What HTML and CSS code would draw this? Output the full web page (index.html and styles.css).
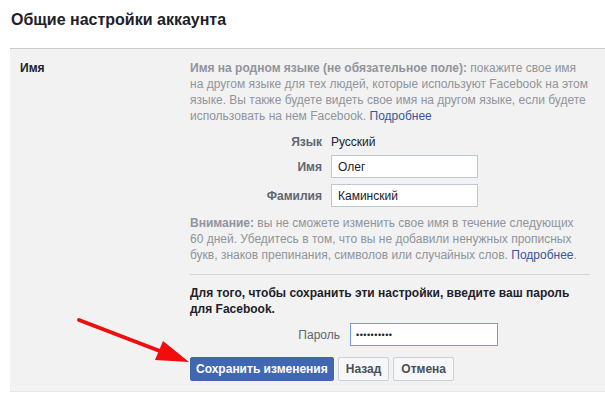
FILE: index.html
```html
<!DOCTYPE html>
<html lang="ru">
<head>
    <meta charset="UTF-8">
    <meta name="viewport" content="width=device-width, initial-scale=1.0">
    <title>Общие настройки аккаунта</title>
    <link rel="stylesheet" href="styles.css">
</head>
<body>
    <h1 class="page-title">Общие настройки аккаунта</h1>
    <div class="settings-panel">
        <div class="setting-label">Имя</div>
        <div class="setting-content">
            <p class="hint">
                <b>Имя на родном языке (не обязательное поле):</b> покажите свое имя<br>
                на другом языке для тех людей, которые используют Facebook на этом<br>
                языке. Вы также будете видеть свое имя на другом языке, если будете<br>
                использовать на нем Facebook. <a href="#">Подробнее</a>
            </p>
            <div class="field-row lang-row">
                <span class="field-label">Язык</span>
                <span class="field-value">Русский</span>
            </div>
            <div class="field-row">
                <span class="field-label">Имя</span>
                <input class="text-input" type="text" value="Олег">
            </div>
            <div class="field-row">
                <span class="field-label">Фамилия</span>
                <input class="text-input" type="text" value="Каминский">
            </div>
            <p class="hint warning">
                <b>Внимание:</b> вы не сможете изменить свое имя в течение следующих<br>
                60 дней. Убедитесь в том, что вы не добавили ненужных прописных<br>
                букв, знаков препинания, символов или случайных слов. <a href="#">Подробнее</a>.
            </p>
            <div class="confirm-block">
                <p class="confirm-text">
                    Для того, чтобы сохранить эти настройки, введите ваш пароль<br>
                    для Facebook.
                </p>
                <div class="password-row">
                    <span class="password-label">Пароль</span>
                    <input class="text-input password-input" type="password" value="1234567890">
                </div>
                <div class="button-row">
                    <button class="btn btn-primary">Сохранить изменения</button>
                    <button class="btn">Назад</button>
                    <button class="btn">Отмена</button>
                </div>
            </div>
        </div>
    </div>
    <!-- red annotation arrow pointing at the save button -->
    <svg class="annotation" width="605" height="393" viewBox="0 0 605 393">
        <line x1="79" y1="320" x2="165" y2="353" stroke="#f20c0c" stroke-width="4" stroke-linecap="round"/>
        <polygon points="189,362 155,360 163,341" fill="#f20c0c"/>
    </svg>
</body>
</html>
```

FILE: styles.css
```css
* {
    margin: 0;
    padding: 0;
    box-sizing: border-box;
}
body {
    background: #fff;
    font-family: 'Liberation Sans', Arial, sans-serif;
    font-size: 12px;
    color: #1d2129;
    position: relative;
    width: 605px;
    height: 393px;
    overflow: hidden;
}
.page-title {
    font-size: 16px;
    line-height: 20px;
    font-weight: bold;
    color: #1d2129;
    padding: 10px 0 18px 11px;
}
.settings-panel {
    margin-left: 10px;
    background: #f2f2f2;
    border-top: 1px solid #cccccc;
    border-bottom: 1px solid #e6e6e6;
    padding: 11px 15px 10px 10px;
    display: grid;
    grid-template-columns: 170px 1fr;
}
.setting-label {
    font-weight: bold;
    line-height: 16px;
    color: #1d2129;
}
.hint {
    color: #90949c;
    line-height: 16px;
}
.hint b {
    color: #90949c;
}
a {
    color: #365899;
    text-decoration: none;
}
.field-row {
    display: flex;
    align-items: center;
    gap: 9px;
    height: 23px;
    margin-top: 6px;
}
.field-row.lang-row {
    height: 20px;
    margin-top: 8px;
}
.field-row.lang-row + .field-row {
    margin-top: 3px;
}
.field-label {
    width: 132px;
    text-align: right;
    font-weight: bold;
    color: #606770;
}
.field-value {
    color: #1d2129;
}
.text-input {
    width: 147px;
    height: 23px;
    border: 1px solid #bdc7d8;
    background: #fff;
    padding: 0 6px;
    font-family: 'Liberation Sans', Arial, sans-serif;
    font-size: 12px;
    color: #1d2129;
    outline: none;
}
.warning {
    margin-top: 8px;
}
.confirm-block {
    margin-top: 11px;
    border-top: 1px solid #d3d6db;
    padding-top: 10px;
}
.confirm-text {
    font-weight: bold;
    line-height: 16px;
    color: #1d2129;
}
.password-row {
    display: flex;
    align-items: center;
    gap: 10px;
    margin-top: 6px;
    height: 23px;
}
.password-label {
    width: 150px;
    text-align: right;
    color: #606770;
}
.password-input {
    width: 148px;
    border-color: #6f9be8;
    font-size: 9px;
    letter-spacing: 0.5px;
    padding: 0 5px;
}
.button-row {
    display: flex;
    gap: 4px;
    margin-top: 11px;
}
.btn {
    height: 24px;
    padding: 0 7px;
    border: 1px solid #ced0d4;
    border-radius: 2px;
    background: #f6f7f9;
    color: #4b4f56;
    font-family: 'Liberation Sans', Arial, sans-serif;
    font-size: 12px;
    font-weight: bold;
}
.btn-primary {
    background: #4267b2;
    border-color: #4267b2;
    color: #fff;
    padding: 0 5px;
}
.annotation {
    position: absolute;
    top: 0;
    left: 0;
    pointer-events: none;
}
```
